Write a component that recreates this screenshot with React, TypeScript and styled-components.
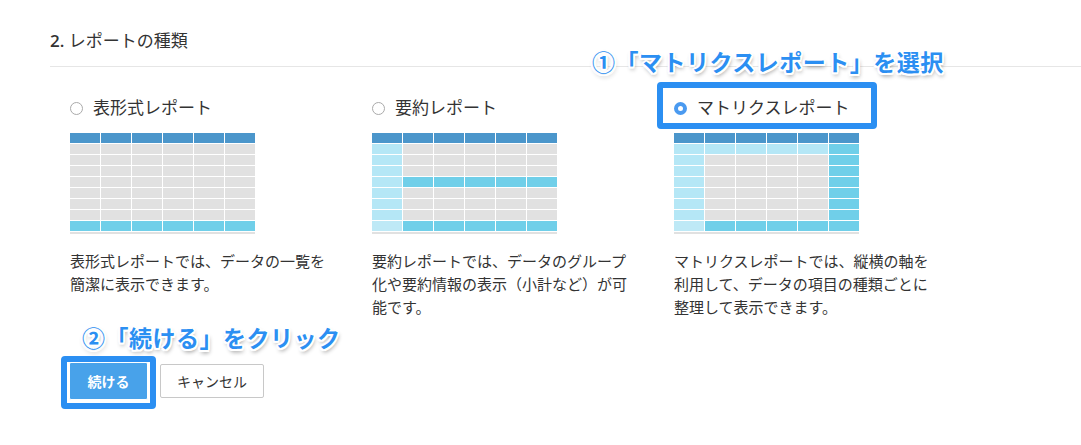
import React from 'react';
import styled, { createGlobalStyle } from 'styled-components';

const GlobalStyle = createGlobalStyle`
  html, body {
    margin: 0;
    padding: 0;
    background: #fff;
  }
  body {
    font-family: "Lato", "Noto Sans CJK JP", sans-serif;
    color: #333;
  }
`;

const C = {
  head: '#4b96cb',
  gray: '#e1e1e1',
  light: '#b5e7f6',
  lighter: '#bee9f6',
  accent: '#70cfe9',
  mark: '#2b8ff2',
};

type Kind = 'tabular' | 'summary' | 'matrix';

// セルの色を表の種類ごとに決める
const cellColor = (kind: Kind, row: number, col: number): string => {
  if (row === 0) return C.head;
  const last = row === 8;
  if (kind === 'tabular') return last ? C.accent : C.gray;
  if (kind === 'summary') {
    if (col === 0) return last ? C.lighter : C.light;
    return last || row === 4 ? C.accent : C.gray;
  }
  if (col === 0) return last ? C.lighter : C.light;
  if (last || col === 5) return C.accent;
  return row === 1 ? C.light : C.gray;
};

const options: { kind: Kind; label: string; desc: string[]; checked?: boolean }[] = [
  {
    kind: 'tabular',
    label: '表形式レポート',
    desc: ['表形式レポートでは、データの一覧を', '簡潔に表示できます。'],
  },
  {
    kind: 'summary',
    label: '要約レポート',
    desc: ['要約レポートでは、データのグループ', '化や要約情報の表示（小計など）が可', '能です。'],
  },
  {
    kind: 'matrix',
    label: 'マトリクスレポート',
    desc: ['マトリクスレポートでは、縦横の軸を', '利用して、データの項目の種類ごとに', '整理して表示できます。'],
    checked: true,
  },
];

const App = () => (
  <>
    <GlobalStyle />
    <Page>
      <Heading>
        <Num>2.</Num> レポートの種類
      </Heading>
      <Divider />
      <Options>
        {options.map((o) => (
          <Option key={o.kind}>
            <Label>
              <Radio $checked={!!o.checked} />
              <span>{o.label}</span>
            </Label>
            <TableWrap>
              <Grid>
                {Array.from({ length: 9 * 6 }).map((_, i) => (
                  <Cell key={i} $bg={cellColor(o.kind, Math.floor(i / 6), i % 6)} />
                ))}
              </Grid>
            </TableWrap>
            <Desc>
              {o.desc.map((line, i) => (
                <div key={i}>{line}</div>
              ))}
            </Desc>
          </Option>
        ))}
      </Options>
      <Buttons>
        <Primary>続ける</Primary>
        <Secondary>キャンセル</Secondary>
      </Buttons>

      <Callout $left={592} $top={46}>①「マトリクスレポート」を選択</Callout>
      <MarkBox $left={657} $top={82} $w={220} $h={47} />
      <Callout $left={82} $top={322}>②「続ける」をクリック</Callout>
      <MarkBox $left={61} $top={356} $w={95} $h={53} />
    </Page>
  </>
);

const Page = styled.div`
  position: relative;
  width: 1081px;
  height: 445px;
  padding: 30px 0 0 50px;
  box-sizing: border-box;
  overflow: hidden;
`;

const Heading = styled.div`
  font-size: 17px;
  line-height: 22px;
  color: #333;
`;

const Num = styled.span`
  font-family: "Open Sans", sans-serif;
  font-weight: 600;
  font-size: 17px;
`;

const Divider = styled.div`
  margin-top: 14px;
  border-top: 1px solid #e6e6e6;
`;

const Options = styled.div`
  display: grid;
  grid-template-columns: 302px 302px 302px;
  padding-left: 20px;
  margin-top: 25px;
`;

const Option = styled.div`
  display: flex;
  flex-direction: column;
`;

const Label = styled.label`
  display: flex;
  align-items: center;
  gap: 10px;
  height: 28px;
  font-size: 17px;
  color: #333;
`;

const Radio = styled.span<{ $checked: boolean }>`
  width: 13px;
  height: 13px;
  margin-top: 4px;
  border-radius: 50%;
  box-sizing: border-box;
  flex: none;
  border: ${(p) => (p.$checked ? '4.5px solid #4a9af0' : '1px solid #aaa')};
  background: #fff;
`;

const TableWrap = styled.div`
  width: 185px;
  margin-top: 13px;
  border-bottom: 2px solid #e1e1e1;
  padding-bottom: 1px;
`;

const Grid = styled.div`
  display: grid;
  grid-template-columns: repeat(6, 30px);
  grid-auto-rows: 10px;
  gap: 1px;
`;

const Cell = styled.div<{ $bg: string }>`
  background: ${(p) => p.$bg};
`;

const Desc = styled.div`
  margin-top: 16px;
  font-size: 15px;
  line-height: 23px;
  color: #333;
`;

const Buttons = styled.div`
  display: flex;
  align-items: center;
  gap: 12px;
  padding-left: 19px;
  margin-top: 43px;
`;

const Primary = styled.button`
  width: 79px;
  height: 38px;
  border: 1px solid #fff;
  border-radius: 2px;
  background: #48a2ea;
  color: #fff;
  font-family: "Lato", "Noto Sans CJK JP", sans-serif;
  font-size: 14px;
  font-weight: 600;
`;

const Secondary = styled.button`
  width: 104px;
  height: 34px;
  border: 1px solid #c8c8c8;
  border-radius: 2px;
  background: #fff;
  color: #333;
  font-family: "Lato", "Noto Sans CJK JP", sans-serif;
  font-size: 14px;
`;

const Callout = styled.div<{ $left: number; $top: number }>`
  position: absolute;
  left: ${(p) => p.$left}px;
  top: ${(p) => p.$top}px;
  font-family: "Noto Sans CJK JP", sans-serif;
  font-size: 23px;
  line-height: 30px;
  font-weight: 700;
  letter-spacing: 0.5px;
  white-space: nowrap;
  color: ${C.mark};
  text-shadow:
    2px 0 0 #fff, -2px 0 0 #fff, 0 2px 0 #fff, 0 -2px 0 #fff,
    1.5px 1.5px 0 #fff, -1.5px 1.5px 0 #fff, 1.5px -1.5px 0 #fff, -1.5px -1.5px 0 #fff,
    1px 3px 4px rgba(0, 0, 0, 0.45);
`;

const MarkBox = styled.div<{ $left: number; $top: number; $w: number; $h: number }>`
  position: absolute;
  left: ${(p) => p.$left}px;
  top: ${(p) => p.$top}px;
  width: ${(p) => p.$w}px;
  height: ${(p) => p.$h}px;
  box-sizing: border-box;
  border: 6px solid ${C.mark};
  border-radius: 4px;
`;

export default App;
